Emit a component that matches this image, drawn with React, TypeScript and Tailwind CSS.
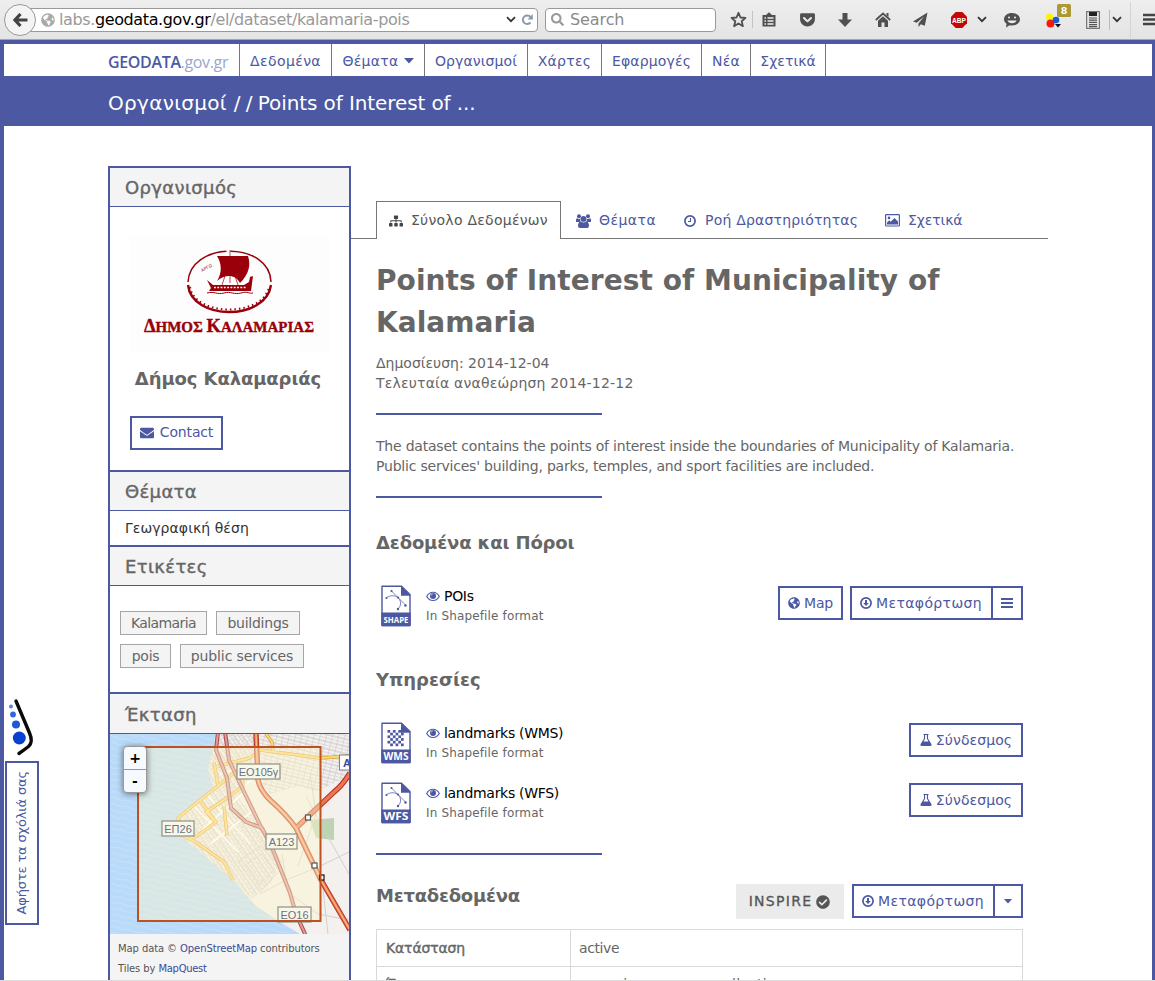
import type { ReactNode } from "react";
import {
  FaEnvelope,
  FaGlobeAmericas,
  FaSitemap,
  FaCheckCircle,
  FaGetPocket,
  FaSearch,
} from "react-icons/fa";

/* ---------- small icons ---------- */

function Chevron() {
  return (
    <svg width="10" height="7" viewBox="0 0 10 7" className="shrink-0">
      <path d="M1 1.2l4 4 4-4" fill="none" stroke="#333" strokeWidth="1.8" />
    </svg>
  );
}

function Eye() {
  return (
    <svg width="14" height="11" viewBox="0 0 14 11" className="shrink-0">
      <path d="M.7 5.500C3.600-.2 10.400-.2 13.300 5.500 10.400 10.800 3.600 10.800.7 5.500z" fill="none" stroke="#4c58a1" strokeWidth="1.1" />
      <circle cx="7" cy="4.9" r="3" fill="#4c58a1" />
      <path d="M5.200 4.600a1.800 1.800 0 0 1 1.700-1.700" fill="none" stroke="#dde" strokeWidth=".7" />
    </svg>
  );
}

function DownCircle() {
  return (
    <svg width="12" height="12" viewBox="0 0 12 12" className="shrink-0">
      <circle cx="6" cy="6" r="5.1" fill="none" stroke="#4c58a1" strokeWidth="1.7" />
      <path d="M5 3h2v3h1.8L6 9 3.200 6H5z" fill="#4c58a1" />
    </svg>
  );
}

function Clock() {
  return (
    <svg width="12" height="12" viewBox="0 0 12 12" className="shrink-0">
      <circle cx="6" cy="6" r="5.1" fill="none" stroke="#4c58a1" strokeWidth="1.7" />
      <path d="M6.500 3v3.500H4" fill="none" stroke="#4c58a1" strokeWidth="1.100" />
    </svg>
  );
}

function Users() {
  return (
    <svg width="15" height="14" viewBox="0 0 15 14" className="shrink-0" fill="#4c58a1">
      <circle cx="3" cy="2.200" r="2" />
      <circle cx="12" cy="2.200" r="2" />
      <path d="M0 7.800V6q0-1.800 1-1.800 1.200 1 3.400.6Q3.800 6.600 4.700 8H1Q0 8 0 7.800zM15 7.800V6q0-1.800-1-1.800-1.200 1-3.400.6.6 1.800-.3 3.200H14q1 0 1-.2z" />
      <circle cx="7.500" cy="4.900" r="2.900" />
      <path d="M4.500 7.500q3 2 6 0 2.500.8 2.500 4.500 0 2-2 2H4q-2 0-2-2 0-3.700 2.500-4.500z" />
    </svg>
  );
}

function Flask() {
  return (
    <svg width="12" height="12" viewBox="0 0 12 12" className="shrink-0">
      <path d="M3.500 0h5v1.100H8v3.400l3.500 5.700Q12 12 10.500 12h-9Q0 12 .5 10.200L4 4.500V1.100h-.5zM5.100 1.100v3.700L3.500 7.500h5L6.900 4.800V1.100z" fill="#4c58a1" fillRule="evenodd" />
    </svg>
  );
}

function Picture() {
  return (
    <svg width="15" height="13" viewBox="0 0 15 13" className="shrink-0">
      <rect x=".6" y=".6" width="13.800" height="11.400" rx=".8" fill="none" stroke="#4c58a1" strokeWidth="1.2" />
      <circle cx="4" cy="3.900" r="1.300" fill="#4c58a1" />
      <path d="M2 10.500V8.500L4.300 6.300l1.400 1.400L9.500 4 13 7.500v3z" fill="#4c58a1" />
    </svg>
  );
}

function FileIcon({ label, kind }: { label: string; kind: "vector" | "raster" }) {
  return (
    <svg width="30" height="42" viewBox="0 0 30 42" className="shrink-0">
      <path d="M1 1.200H20.500L29 9.500V40.500H1z" fill="#fff" stroke="#4c58a1" strokeWidth="1.400" strokeLinejoin="round" />
      <path d="M20 .8V10.800H29.700z" fill="#4c58a1" />
      <path d="M.3 27.500H29.700V40a1.200 1.200 0 0 1-1.200 1.200h-27A1.200 1.200 0 0 1 .3 40z" fill="#4c58a1" />
      {kind === "vector" ? (
        <g fill="none" stroke="#5d68a8" strokeWidth=".8">
          <path d="M10.500 6L24.500 20M5 13C9 9.500 18 9.500 19.500 17c.3 3-.5 5-2.500 7" />
          <g fill="#4c58a1" stroke="none">
            <circle cx="10.500" cy="6" r="1.100" />
            <circle cx="17" cy="12.500" r="1.100" />
            <circle cx="24.500" cy="20.500" r="1.200" />
            <circle cx="5.500" cy="13" r="1.100" />
            <circle cx="17" cy="24" r="1.200" />
          </g>
        </g>
      ) : (
        <g fill="#4c58a1">
          {[0, 1, 2, 3, 4, 5].map((r) =>
            [0, 1, 2, 3, 4, 5].map((c) =>
              (r + c) % 2 === 0 ? (
                <rect key={`${r}-${c}`} x={6.500 + c * 2.700} y={8 + r * 2.700} width="2.700" height="2.700" />
              ) : null,
            ),
          )}
        </g>
      )}
      <text
        x="15"
        y={label.length > 3 ? 37.500 : 38.200}
        textAnchor="middle"
        textLength="25"
        lengthAdjust="spacingAndGlyphs"
        fontFamily="Open Sans"
        fontWeight="700"
        fontSize={label.length > 3 ? 8.500 : 11}
        fill="#fff"
      >
        {label}
      </text>
    </svg>
  );
}

/* ---------- browser toolbar ---------- */

function Toolbar() {
  return (
    <div className="flex h-10 shrink-0 items-center border-b border-[#a5a5ab] bg-gradient-to-b from-[#eeeeee] to-[#e4e4e4] pl-1 text-[#505050]">
      <div className="z-10 flex size-8 shrink-0 items-center justify-center rounded-full border border-[#999] bg-[#f4f4f4]">
        <svg width="15" height="14" viewBox="0 0 15 14">
          <path d="M7.500 1L2 7l5.500 6M2 7h12.500" fill="none" stroke="#444" strokeWidth="3.200" />
        </svg>
      </div>
      <div className="-ml-3 flex h-6 w-[514px] shrink-0 items-center rounded-r-sm border border-[#999] bg-white pl-4">
        <FaGlobeAmericas className="size-[14px] shrink-0 text-[#aaa]" />
        <span className="ml-1 w-[440px] whitespace-nowrap text-[16px] tracking-[-0.38px] text-[#999]">
          labs.<span className="text-black">geodata.gov.gr</span>/el/dataset/kalamaria-pois
        </span>
        <span className="ml-[7px] flex">
          <Chevron />
        </span>
        <svg width="12" height="12" viewBox="0 0 12 12" className="ml-[5px] shrink-0">
          <path d="M9.500 8.500A4.300 4.300 0 1 1 9.500 3" fill="none" stroke="#8d99a8" strokeWidth="2" />
          <path d="M11.800 0v5.500H6.500z" fill="#8d99a8" />
        </svg>
      </div>
      <div className="ml-[7px] flex h-6 w-[171px] shrink-0 items-center rounded-sm border border-[#999] bg-white pl-[5px]">
        <FaSearch className="size-[13px] text-[#999]" />
        <span className="ml-[6px] text-[16px] tracking-[-0.1px] text-[#8a8a8a]">Search</span>
      </div>
      <div className="flex w-[37px] shrink-0 items-center justify-center border-r border-[#c4c4c4] pl-2">
        <svg width="17" height="17" viewBox="0 0 17 17">
          <path d="M8.500 1.800l2 4.700 5 .4-3.800 3.300 1.200 5-4.400-2.700-4.400 2.700 1.200-5L1.500 6.900l5-.4z" fill="none" stroke="#505050" strokeWidth="1.800" strokeLinejoin="round" />
        </svg>
      </div>
      <div className="flex w-[32px] shrink-0 justify-center">
        <svg width="14" height="15" viewBox="0 0 14 15">
          <path d="M.5 3h3.500L7 .2 10 3h3.500v11.500H.5z" fill="#505050" />
          <path d="M2.500 6h1.500M5.500 6h6M2.500 9h1.500M5.500 9h6M2.500 12h1.500M5.500 12h6" stroke="#eee" strokeWidth="1.600" />
        </svg>
      </div>
      <div className="flex w-[44px] shrink-0 justify-center">
        <FaGetPocket className="size-[17px]" />
      </div>
      <div className="flex w-[32px] shrink-0 justify-center">
        <svg width="14" height="14" viewBox="0 0 14 14">
          <path d="M4.500 0h5v6.500H14L7 14 0 6.500h4.500z" fill="#505050" />
        </svg>
      </div>
      <div className="flex w-[44px] shrink-0 justify-center">
        <svg width="16" height="15" viewBox="0 0 16 15">
          <path d="M.8 8L8 1.500 15.200 8" fill="none" stroke="#505050" strokeWidth="1.800" />
          <path d="M11.500 1h2v4l-2-1.700zM3 8.800l5-4.500 5 4.500V15H9.500v-4.500h-3V15H3z" fill="#505050" />
        </svg>
      </div>
      <div className="flex w-[30px] shrink-0 justify-center">
        <svg width="15" height="15" viewBox="0 0 15 15">
          <path d="M14.500.5L0 9.500l3.800 1.300L11 4.500l-5.500 7V15l2.300-2.700 4 1.400z" fill="#505050" />
        </svg>
      </div>
      <div className="flex w-[48px] shrink-0 justify-center">
        <svg width="16" height="16" viewBox="0 0 16 16">
          <path d="M4.700 0h6.600L16 4.700v6.600L11.300 16H4.700L0 11.300V4.700z" fill="#c40808" />
          <text x="8" y="11" fontFamily="Liberation Sans" fontSize="7.500" fontWeight="700" fill="#fff" textAnchor="middle" textLength="14" lengthAdjust="spacingAndGlyphs">
            ABP
          </text>
        </svg>
      </div>
      <span className="-ml-[6px] flex shrink-0">
        <Chevron />
      </span>
      <svg width="18" height="16" viewBox="0 0 18 16" className="ml-4 shrink-0">
        <path d="M9 1c4.500 0 8 2.700 8 6.300S13.500 13.500 9 13.500c-.8 0-1.600 0-2.300-.2L3 15.500l.5-3.700C2 10.700 1 9.100 1 7.300 1 3.700 4.500 1 9 1z" fill="#505050" />
        <circle cx="6" cy="5.500" r="1" fill="#eee" />
        <circle cx="12" cy="5.500" r="1" fill="#eee" />
        <path d="M4.500 8.500h9C12.500 12 5.500 12 4.500 8.500z" fill="#eee" />
      </svg>
      <svg width="30" height="28" viewBox="0 0 30 28" className="mb-3 ml-[22px] shrink-0">
        <circle cx="6.500" cy="17" r="3.600" fill="#fdf303" />
        <circle cx="7.500" cy="23.500" r="4" fill="#f21b0b" />
        <circle cx="13" cy="20" r="3.300" fill="#175bd8" />
        <path d="M12 24h6l-3 3.500z" fill="#111" />
        <rect x="14" y="4" width="14" height="13" rx="1.500" fill="#ab9836" />
        <text x="21" y="14" fontFamily="DejaVu Sans" fontSize="9.500" fontWeight="700" fill="#fff" textAnchor="middle">
          8
        </text>
      </svg>
      <svg width="14" height="18" viewBox="0 0 14 18" className="ml-[13px] shrink-0">
        <rect x=".6" y=".6" width="12.800" height="16.800" fill="#e5e5e5" stroke="#777" strokeWidth="1.200" />
        <rect x="3" y="1" width="8" height="4" fill="#222" />
        <path d="M3 7h8M3 9.200h8M3 11.400h8M3 13.600h8M3 15.600h8" stroke="#555" strokeWidth="1.200" />
      </svg>
      <div className="ml-[9px] flex h-5 shrink-0 items-center border-l border-[#bbb] pl-[2px]">
        <Chevron />
      </div>
      <div className="ml-2 flex h-9 shrink-0 items-center border-l border-[#d4d4d4] pl-3">
        <svg width="13" height="14" viewBox="0 0 13 14">
          <path d="M0 2h13M0 6.500h13M0 11h13" stroke="#444" strokeWidth="2.400" />
        </svg>
      </div>
    </div>
  );
}

/* ---------- site header ---------- */

function NavItem({ className, children }: { className: string; children: ReactNode }) {
  return (
    <a className={`flex h-full shrink-0 items-center justify-center whitespace-nowrap border-r border-[#777] pt-[2px] ${className}`}>
      {children}
    </a>
  );
}

function SiteNav() {
  return (
    <nav className="flex h-8 shrink-0 items-center bg-white pl-[104px] text-[14px] text-[#4c58a1]">
      <div className="flex h-full w-[132px] shrink-0 items-center border-r border-[#777] pt-1 font-['Open_Sans'] text-[16px] tracking-[-0.35px]">
        <span className="font-semibold">GEODATA</span>
        <span className="text-[#9aa7cd]">.gov.gr</span>
      </div>
      <NavItem className="w-[92px] tracking-[0.4px]">Δεδομένα</NavItem>
      <NavItem className="w-[93px] gap-[5px] tracking-[0.3px]">
        Θέματα
        <svg width="10" height="6" viewBox="0 0 10 6">
          <path d="M0 0h10L5 5.500z" fill="#4c58a1" />
        </svg>
      </NavItem>
      <NavItem className="w-[103px] tracking-[0.1px]">Οργανισμοί</NavItem>
      <NavItem className="w-[74px] tracking-[0.3px]">Χάρτες</NavItem>
      <NavItem className="w-[100px] tracking-[0.15px]">Εφαρμογές</NavItem>
      <NavItem className="w-[49px] tracking-[0.2px]">Νέα</NavItem>
      <NavItem className="w-[75px] tracking-[0.05px]">Σχετικά</NavItem>
    </nav>
  );
}

/* ---------- sidebar ---------- */

function SideHeading({ className = "h-[39px]", children }: { className?: string; children: ReactNode }) {
  return (
    <h2 className={`flex shrink-0 items-center border-b border-[#4c58a1] bg-[#f4f4f5] pl-[15px] text-[18px] tracking-[0.35px] text-[#666] [-webkit-text-stroke:0.4px_#666] ${className}`}>
      {children}
    </h2>
  );
}

function OrgLogo() {
  return (
    <svg width="200" height="115" viewBox="0 0 200 115" className="mx-auto shrink-0">
      <rect width="200" height="115" fill="#fdfdfd" />
      <g fill="none" stroke="#990009">
        <path d="M58 45C60 4 140 4 141 45" strokeWidth="1.500" strokeDasharray="54 4 100" />
        <path d="M58 48c4 36 78 36 83 0" strokeWidth="2.400" />
        <path d="M60 50c5 30 73 30 79 0" strokeWidth="2" strokeDasharray="1.500 3" />
      </g>
      <g fill="#990009">
        <path d="M87 19h31c3 9 1 18-8 27-4-8-14-10-23-2 5-8 5-17 0-25z" />
        <path d="M77 43l6 5h31l5-3 1-5 3-1-2 15H79l2-3z" />
        <text x="99" y="95" textAnchor="middle" fontFamily="Liberation Serif" fontWeight="700" fontSize="15.500" textLength="170" lengthAdjust="spacingAndGlyphs" stroke="#990009" strokeWidth=".4">
          <tspan fontSize="19">Δ</tspan>ΗΜΟΣ <tspan fontSize="19">Κ</tspan>ΑΛΑΜΑΡΙΑΣ
        </text>
        <text x="72" y="35" fontFamily="Liberation Sans" fontSize="4.500" transform="rotate(-28 72 35)">
          ΑΡΓΩ
        </text>
      </g>
      <path d="M100 13v33M95 39l-3 9M105 39l3 9" stroke="#990009" strokeWidth=".7" />
      <path d="M84 50.500h32" stroke="#fff" strokeWidth="1.400" strokeDasharray="1.800 1.500" />
      <path d="M77 56c8-2 10 2 17 0s10 2 17 0 8 1 12 0" fill="none" stroke="#990009" strokeWidth="1" />
    </svg>
  );
}

function Tag({ className, children }: { className: string; children: ReactNode }) {
  return (
    <span className={`flex h-6 items-center justify-center whitespace-nowrap border border-[#a6a6a6] bg-[#f4f4f4] text-[14px] text-[#666] ${className}`}>
      {children}
    </span>
  );
}

function MapLabel({ x, y, w, children }: { x: number; y: number; w: number; children: string }) {
  return (
    <g>
      <rect x={x} y={y} width={w} height="15" fill="#f9f7e9" stroke="#8d9186" strokeWidth="1.200" />
      <text x={x + w / 2} y={y + 11.500} textAnchor="middle" fontFamily="Liberation Sans" fontSize="11" fill="#6b7280">
        {children}
      </text>
    </g>
  );
}

const motorway = "M146 0L148 46Q150 56 160 66Q176 80 186 94L211 146L240 196";
const motorwayBranch = "M240 39Q232 52 224 58L186 94";
const expressway = "M108 -2L106 16L117 44L121 74L136 88L152 94L163 116L180 159L186 180L196 202";
const expressway2 = "M115 -2L119 26L135 60L153 97";
const yellowRoads =
  "M104 28L108 52L90 66L68 84L69 92M69 100L84 107L100 118L114 128L123 146M108 32L140 24L150 16L180 20L210 24L240 22M108 52L130 34M90 66L106 88L84 104M106 88L96 78L120 62L133 52L131 38M114 72L117 102M156 0L162 8L163 18";

function ExtentMap() {
  return (
    <div className="relative h-[200px] shrink-0 overflow-hidden bg-[#b8d6f2]">
      <svg width="239" height="200" viewBox="0 0 239 200" className="block">
        <defs>
          <pattern id="waves" width="14" height="6" patternUnits="userSpaceOnUse" patternTransform="rotate(12)">
            <rect width="14" height="6" fill="#b9daf9" />
            <path d="M0 2q3.500-1.500 7 0t7 0" fill="none" stroke="#c8e3fd" strokeWidth="1" />
          </pattern>
          <pattern id="streets" width="7" height="5.500" patternUnits="userSpaceOnUse" patternTransform="rotate(-34)">
            <path d="M0 0h7M0 0v5.500M4 0v5.500M0 3h4" fill="none" stroke="#c4c0bd" strokeWidth=".8" />
          </pattern>
          <pattern id="streets2" width="6" height="7" patternUnits="userSpaceOnUse" patternTransform="rotate(14)">
            <path d="M0 0h6M0 0v7M0 4h6" fill="none" stroke="#bdbabb" strokeWidth=".8" />
          </pattern>
        </defs>
        <rect width="239" height="200" fill="url(#waves)" />
        <path d="M105 0L104 12L98 34L103 54L68 84L66 97L90 118L123 146L146 172L170 188L190 200H239V0z" fill="#f3f0ee" />
        <path d="M105 0L104 12L98 34L103 54L68 84L66 97L90 118L123 146L142 165L160 150L172 128L155 98L130 66L140 40L146 0z" fill="url(#streets)" />
        <path d="M144 0H239V42L205 58L190 52L160 60L148 44z" fill="url(#streets2)" />
        <path d="M200 86L224 84V106L206 104z" fill="#bcd4b2" />
        <g fill="none" stroke="#d2cfcc" strokeWidth="1">
          <path d="M176 146L206 134L239 118M196 62L214 96L239 140M180 160L208 180L239 186M150 160L176 146L172 120M200 40L206 80L188 132M212 146L218 200M128 128L150 112L172 134L150 158zM136 130L152 120L164 136L150 150z" />
          <path d="M108 70L150 40M92 96L132 60M100 110L144 76M84 72L128 118M98 62L140 110M110 40L140 30" stroke="#fff" strokeWidth="1.800" />
        </g>
        <g fill="none" strokeLinejoin="round">
          <path d={yellowRoads} stroke="#dfa433" strokeWidth="3.400" />
          <path d={yellowRoads} stroke="#fcd779" strokeWidth="2" />
          <path d={expressway} stroke="#a84b52" strokeWidth="4" />
          <path d={expressway2} stroke="#a84b52" strokeWidth="4" />
          <path d={expressway} stroke="#df9c94" strokeWidth="2" />
          <path d={expressway2} stroke="#df9c94" strokeWidth="2" />
          <path d={motorwayBranch} stroke="#b5362c" strokeWidth="5.400" />
          <path d={motorway} stroke="#b5362c" strokeWidth="5.400" />
          <path d={motorwayBranch} stroke="#ee7652" strokeWidth="3.200" />
          <path d={motorway} stroke="#ee7652" strokeWidth="3.200" />
          <path d={motorway} stroke="#f9c27a" strokeWidth="1.200" />
        </g>
        <rect x="28" y="13" width="182.500" height="174" fill="#fff6cc" fillOpacity=".45" />
        <MapLabel x={127} y={30} w={43}>ΕΟ105γ</MapLabel>
        <MapLabel x={52} y={87} w={32}>ΕΠ26</MapLabel>
        <MapLabel x={156} y={100} w={31}>Α123</MapLabel>
        <MapLabel x={168} y={173} w={33}>ΕΟ16</MapLabel>
        <rect x="229.500" y="21" width="20" height="15" fill="#fff" stroke="#7a8296" />
        <text x="233" y="33" fontFamily="Liberation Sans" fontSize="11" fontWeight="700" fill="#3b4f96">
          A
        </text>
        <g fill="#fff" stroke="#555" strokeWidth="1.200">
          <rect x="195.500" y="81" width="5" height="5" />
          <rect x="202" y="129" width="5" height="5" />
          <rect x="209.500" y="141" width="4.500" height="5" stroke="#111" />
        </g>
        <rect x="28" y="13" width="182.500" height="174" fill="none" stroke="#bd5220" strokeWidth="2" />
      </svg>
      <div className="absolute left-[13px] top-[12px] flex w-[24px] flex-col overflow-hidden rounded border border-[#999] bg-[#f6f9fd] text-[14px] font-bold text-black shadow-[0_1px_6px_rgba(0,0,0,0.5)]">
        <span className="flex h-[23px] items-center justify-center border-b border-[#999]">+</span>
        <span className="flex h-[22px] items-center justify-center">-</span>
      </div>
    </div>
  );
}

function Sidebar() {
  return (
    <aside className="flex w-[243px] shrink-0 flex-col border-2 border-b-0 border-[#4c58a1] bg-white">
      <SideHeading>Οργανισμός</SideHeading>
      <section className="flex h-[265px] flex-col border-b-2 border-[#4c58a1] px-[20px] pt-[30px]">
        <OrgLogo />
        <h3 className="-ml-[3px] mt-[15px] whitespace-nowrap text-center text-[18px] font-bold leading-[24px] tracking-[-0.1px] text-[#666]">
          Δήμος Καλαμαριάς
        </h3>
        <a className="mt-[25px] flex h-[34px] w-[93px] items-center justify-center gap-[6px] border-2 border-[#4c58a1] pb-px text-[14px] tracking-[-0.15px] text-[#4c58a1]">
          <FaEnvelope className="size-[14px]" />
          Contact
        </a>
      </section>
      <SideHeading>Θέματα</SideHeading>
      <div className="flex h-[36px] items-center border-b-2 border-[#4c58a1] pl-[15px] text-[14px] tracking-[0.06px] text-[#333]">Γεωγραφική θέση</div>
      <SideHeading>Ετικέτες</SideHeading>
      <div className="flex h-[108px] flex-wrap content-start gap-x-[9px] gap-y-[9px] border-b-2 border-[#4c58a1] pl-[10px] pt-[25px]">
        <Tag className="w-[87px] tracking-[-0.6px]">Kalamaria</Tag>
        <Tag className="w-[84px] tracking-[-0.25px]">buildings</Tag>
        <Tag className="w-[51px] tracking-[-0.3px]">pois</Tag>
        <Tag className="w-[124px] tracking-[-0.1px]">public services</Tag>
      </div>
      <SideHeading className="h-[40px] pt-px">Έκταση</SideHeading>
      <ExtentMap />
      <div className="grow bg-[#f4f4f4] pl-2 pt-[5px] text-[10px] leading-[20px] tracking-[-0.1px] text-[#555]">
        <p className="whitespace-nowrap">
          Map data © <a className="text-[#3f4a99]">OpenStreetMap</a> contributors
        </p>
        <p>
          Tiles by <a className="tracking-[-0.3px] text-[#3f4a99]">MapQuest</a>
        </p>
      </div>
    </aside>
  );
}

/* ---------- dataset ---------- */

function Tabs() {
  return (
    <div className="flex h-[38px] shrink-0 text-[14px] text-[#4c58a1]">
      <div className="w-[25px] border-b border-[#777]" />
      <a className="flex w-[185px] items-center gap-2 whitespace-nowrap border border-b-0 border-[#777] pl-3 tracking-[0.26px] text-[#555]">
        <FaSitemap className="size-[14px] text-[#444]" />
        Σύνολο Δεδομένων
      </a>
      <div className="flex grow items-center whitespace-nowrap border-b border-[#777] pl-[15px] pt-[2px]">
        <a className="flex w-[107px] items-center gap-2 tracking-[0.45px]">
          <Users />
          Θέματα
        </a>
        <a className="flex w-[202px] items-center gap-[9px] pl-px tracking-[0.2px]">
          <Clock />
          Ροή Δραστηριότητας
        </a>
        <a className="flex items-center gap-2 tracking-[-0.1px]">
          <Picture />
          Σχετικά
        </a>
      </div>
    </div>
  );
}

function Rule() {
  return <div className="h-[2px] w-[226px] shrink-0 bg-[#4c58a1]" />;
}

function Button({ className, children }: { className: string; children: ReactNode }) {
  return (
    <a className={`flex h-[34px] shrink-0 items-center justify-center gap-1 whitespace-nowrap border-2 border-[#4c58a1] text-[14px] text-[#4c58a1] ${className}`}>
      {children}
    </a>
  );
}

function Resource({ label, kind, title, children }: { label: string; kind: "vector" | "raster"; title: string; children: ReactNode }) {
  return (
    <div className="flex h-[60px] shrink-0 items-start pl-[5px]">
      <FileIcon label={label} kind={kind} />
      <div className="ml-[15px] grow pt-px">
        <div className="flex h-[21px] items-center gap-1 text-[14px] tracking-[-0.3px] text-black">
          <Eye />
          {title}
        </div>
        <div className="h-[20px] text-[12px] leading-[19px] tracking-[0.15px] text-[#666]">In Shapefile format</div>
      </div>
      <div className="mt-px flex">{children}</div>
    </div>
  );
}

function Dataset() {
  return (
    <main className="flex w-[697px] shrink-0 flex-col pt-[35px]">
      <Tabs />
      <div className="flex w-[672px] flex-col pl-[25px] text-[#666]">
        <h1 className="mt-[21px] text-[28px] font-bold leading-[42px] tracking-[0.06px]">Points of Interest of Municipality of Kalamaria</h1>
        <p className="mt-[9px] text-[14px] leading-[20px]">Δημοσίευση: 2014-12-04</p>
        <p className="mb-5 text-[14px] leading-[20px] tracking-[0.19px]">Τελευταία αναθεώρηση 2014-12-12</p>
        <Rule />
        <p className="mb-5 mt-[21px] whitespace-nowrap text-[14px] leading-[20px] tracking-[-0.21px]">
          The dataset contains the points of interest inside the boundaries of Municipality of Kalamaria.
          <br />
          Public services' building, parks, temples, and sport facilities are included.
        </p>
        <Rule />
        <h2 className="mt-[30px] text-[18px] font-bold leading-[29px] tracking-[-0.14px]">Δεδομένα και Πόροι</h2>
        <div className="mt-[28px] flex flex-col">
          <Resource label="SHAPE" kind="vector" title="POIs">
            <Button className="mr-[7px] w-[65px] tracking-[-0.2px]">
              <FaGlobeAmericas className="size-3" />
              Map
            </Button>
            <Button className="w-[143px] pr-px tracking-[0.37px]">
              <DownCircle />
              Μεταφόρτωση
            </Button>
            <Button className="-ml-[2px] w-[32px]">
              <svg width="12" height="10" viewBox="0 0 12 10">
                <path d="M0 1h12M0 5h12M0 9h12" stroke="#4c58a1" strokeWidth="2" />
              </svg>
            </Button>
          </Resource>
        </div>
        <h2 className="mt-5 text-[18px] font-bold leading-[29px]">Υπηρεσίες</h2>
        <div className="mt-[28px] flex flex-col">
          <Resource label="WMS" kind="raster" title="landmarks (WMS)">
            <Button className="w-[114px] tracking-[0.1px]">
              <Flask />
              Σύνδεσμος
            </Button>
          </Resource>
          <Resource label="WFS" kind="vector" title="landmarks (WFS)">
            <Button className="w-[114px] tracking-[0.1px]">
              <Flask />
              Σύνδεσμος
            </Button>
          </Resource>
        </div>
        <div className="mt-[11px] flex flex-col">
          <Rule />
        </div>
        <div className="mt-[29px] flex h-[35px] items-start">
          <h2 className="mr-auto text-[18px] font-bold leading-[24px] tracking-[-0.25px]">Μεταδεδομένα</h2>
          <span className="mr-2 flex h-[35px] w-[108px] items-center justify-center gap-1 bg-[#ebebeb] pr-px text-[14px] tracking-[1.3px] text-[#555] [-webkit-text-stroke:0.3px_#555]">
            INSPIRE
            <FaCheckCircle className="size-[14px]" />
          </span>
          <Button className="w-[143px] pr-px tracking-[0.37px]">
            <DownCircle />
            Μεταφόρτωση
          </Button>
          <Button className="-ml-[2px] w-[30px]">
            <svg width="8" height="5" viewBox="0 0 8 5">
              <path d="M0 0h8L4 4.500z" fill="#4c58a1" />
            </svg>
          </Button>
        </div>
        <div className="mt-[10px] grid grid-cols-[194px_1fr] border-l border-t border-[#d9d9d9] text-[14px]">
          <div className="flex h-[37px] items-center border-b border-r border-[#d9d9d9] pl-[9px] tracking-[-0.15px] [-webkit-text-stroke:0.4px_#666]">Κατάσταση</div>
          <div className="flex h-[37px] items-center border-b border-r border-[#d9d9d9] pl-[8px] tracking-[-0.4px]">active</div>
          <div className="flex h-[34px] items-center border-r border-[#d9d9d9] pl-[9px] [-webkit-text-stroke:0.4px_#666]">Έκταση</div>
          <div className="flex h-[34px] items-center border-r border-[#d9d9d9] pl-[8px] tracking-[0.2px]">a service resource collection</div>
        </div>
      </div>
    </main>
  );
}

function Feedback() {
  return (
    <div className="absolute left-[5px] top-[698px] flex w-[34px] flex-col">
      <svg width="30" height="58" viewBox="0 0 30 58" className="ml-[2px]">
        <path d="M9 3l13.500 32q4 9-1 13.500Q17 52 12 55.500" fill="none" stroke="#0a0a0a" strokeWidth="3.400" strokeLinecap="round" />
        <circle cx="4" cy="8.500" r="2" fill="#4f86e6" />
        <circle cx="6" cy="16.500" r="2.900" fill="#2f68dc" />
        <circle cx="9" cy="26.500" r="4" fill="#1f57d6" />
        <circle cx="12.300" cy="40" r="6.500" fill="#0a40cf" />
      </svg>
      <div className="mt-[5px] flex h-[164px] w-[34px] items-center justify-center border-2 border-[#4c58a1] bg-white">
        <span className="-rotate-90 whitespace-nowrap text-[13px] tracking-[-0.15px] text-[#4c58a1]">Αφήστε τα σχόλιά σας</span>
      </div>
    </div>
  );
}

export default function App() {
  return (
    <div className="relative flex h-[981px] w-[1155px] flex-col overflow-hidden bg-white font-['DejaVu_Sans',sans-serif]">
      <Toolbar />
      <div className="flex min-h-0 grow flex-col overflow-hidden border-x-4 border-t-4 border-r-[3px] border-[#4c58a1]">
        <SiteNav />
        <header className="flex h-[50px] shrink-0 items-center bg-[#4c58a1] pl-[104px] pt-1 text-[20px] text-white">
          <span className="tracking-[0.3px]">Οργανισμοί</span>
          <span className="ml-[7px] tracking-[-0.6px]">/ /</span>
          <span className="ml-[6px] tracking-[-0.1px]">Points of Interest of ...</span>
        </header>
        <div className="flex min-h-0 grow pl-[104px] pt-10">
          <Sidebar />
          <Dataset />
        </div>
      </div>
      <div className="h-px shrink-0 bg-[#dcdcdc]" />
      <Feedback />
    </div>
  );
}
